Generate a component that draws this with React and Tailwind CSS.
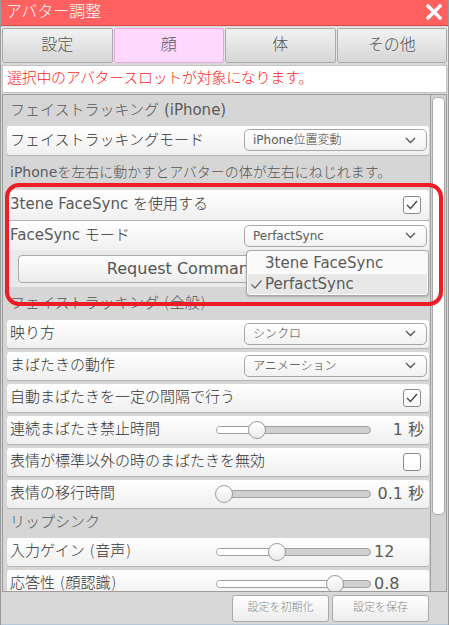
import React from "react";

const F = { fontFamily: '"DejaVu Sans", "Noto Sans CJK JP", sans-serif' };

function L({ children }) {
  return <span className="font-normal text-[#5a5a5a]">{children}</span>;
}

function Chevron() {
  return (
    <svg width="11" height="7" viewBox="0 0 11 7" className="shrink-0">
      <path d="M1 1 L5.5 5.5 L10 1" fill="none" stroke="#555" strokeWidth="1.3" />
    </svg>
  );
}

function Select({ value }) {
  return (
    <div className="ml-auto mr-[2px] w-[183px] h-[22px] rounded-[5px] border border-[#a8a8a8] bg-gradient-to-b from-white to-[#f2f2f2] flex items-center pl-[8px] pr-[10px]">
      <span className="text-[12px] text-[#444] leading-none">{value}</span>
      <span className="ml-auto"><Chevron /></span>
    </div>
  );
}

function Check({ checked }) {
  return (
    <div className="ml-auto mr-[8px] w-[18px] h-[18px] rounded-[3px] border border-[#8a8a8a] bg-white flex items-center justify-center">
      {checked && (
        <svg width="14" height="12" viewBox="0 0 14 12">
          <path d="M2 6 L5.5 9.5 L12 2" fill="none" stroke="#444" strokeWidth="1.3" />
        </svg>
      )}
    </div>
  );
}

function Slider({ pos, value, right }) {
  return (
    <div className="ml-auto flex items-center">
      <div className="relative w-[155px] h-[18px] flex items-center">
        <div className="w-full h-[8px] rounded-full border border-[#a0a0a0] bg-[#d0d0d0] overflow-hidden flex">
          <div className="h-full bg-white" style={{ width: pos + "px" }} />
        </div>
        <div
          className="absolute top-0 w-[18px] h-[18px] rounded-full border border-[#9a9a9a] bg-gradient-to-b from-white to-[#ececec]"
          style={{ left: pos - 9 + "px" }}
        />
      </div>
      <div className={"w-[58px] flex text-[16px] text-[#5a5a5a] leading-none font-normal " + (right ? "justify-end pr-[5px]" : "pl-[3px]")}>
        {value}
      </div>
    </div>
  );
}

function Row({ label, children, h = "h-[28px]" }) {
  return (
    <div className={h + " rounded-[3px] bg-gradient-to-b from-white to-[#efefef] shadow-[0_1px_0_#b4b4b4] flex items-center pl-[3px]"}>
      <span className="text-[15px] text-[#333] leading-none whitespace-nowrap">{label}</span>
      {children}
    </div>
  );
}

function Section({ label, h }) {
  return (
    <div className={h + " flex items-center pl-[3px]"}>
      <span className="text-[15px] text-[#555] leading-none">{label}</span>
    </div>
  );
}

function Tab({ label, active }) {
  return (
    <div
      className={
        "flex-1 flex items-center justify-center rounded-[2px] border text-[16px] text-[#555] " +
        (active
          ? "bg-[#ffd8ff] border-[#e6a6e6]"
          : "bg-gradient-to-b from-[#f2f2f2] to-[#d6d6d6] border-[#a9a9a9]")
      }
    >
      {label}
    </div>
  );
}

export default function App() {
  return (
    <div style={F} className="relative w-[449px] h-[625px] overflow-hidden bg-[#d9d9d9] border-x border-[#9a9a9a] flex flex-col font-light">
      {/* title */}
      <div className="h-[26px] bg-[#ff6161] flex items-center pl-[5px] pr-[6px] border-b border-[#d84c4c]">
        <span className="text-white text-[16px] leading-none">アバター調整</span>
        <svg className="ml-auto" width="16" height="16" viewBox="0 0 16 16">
          <path d="M2 2 L14 14 M14 2 L2 14" stroke="white" strokeWidth="3.4" strokeLinecap="square" />
        </svg>
      </div>
      {/* tabs */}
      <div className="mt-[1px] h-[36px] flex gap-[1px] px-[1px] bg-[#e6e6e6] pt-[1px]">
        <Tab label="設定" />
        <Tab label="顔" active />
        <Tab label="体" />
        <Tab label="その他" />
      </div>
      {/* notice */}
      <div className="mt-[2px] mx-[1px] h-[28px] bg-white border border-[#c4c4c4] flex items-center pl-[4px]">
        <span className="text-[15px] text-[#ff1f1f] leading-none tracking-[-0.3px]">選択中のアバタースロットが対象になります。</span>
      </div>
      {/* panel */}
      <div className="mt-[1px] mx-[1px] h-[500px] border border-[#9c9c9c] bg-[#d6d6d6] flex overflow-hidden">
        <div className="flex-1 flex flex-col pl-[4px] pr-[1px] overflow-hidden">
          <Section label={<>フェイストラッキング <L>(iPhone)</L></>} h="h-[31px] shrink-0" />
          <Row label="フェイストラッキングモード" h="h-[29px] shrink-0">
            <Select value={<><L>iPhone</L>位置変動</>} />
          </Row>
          <div className="h-[35px] shrink-0 flex items-center pl-[3px]">
            <span className="text-[14px] text-[#555] leading-none whitespace-nowrap"><L>iPhone</L>を左右に動かすとアバターの体が左右にねじれます。</span>
          </div>
          <Row label={<><L>3tene FaceSync</L> を使用する</>} h="h-[30px] shrink-0">
            <Check checked />
          </Row>
          <div className="h-[1px] shrink-0" />
          <Row label={<><L>FaceSync</L> モード</>} h="h-[30px] shrink-0">
            <Select value={<L>PerfactSync</L>} />
          </Row>
          <div className="h-[36px] shrink-0 bg-[#e9e9e9] flex items-center pl-[11px]">
            <div className="w-[330px] h-[28px] rounded-[4px] border border-[#a8a8a8] bg-gradient-to-b from-white to-[#ebebeb] flex items-center justify-center">
              <span className="text-[16px] text-[#555] leading-none font-normal">Request Command</span>
            </div>
          </div>
          <Section label="フェイストラッキング (全般)" h="h-[33px] shrink-0" />
          <div className="flex flex-col gap-[4px] shrink-0">
            <Row label="映り方"><Select value="シンクロ" /></Row>
            <Row label="まばたきの動作"><Select value="アニメーション" /></Row>
            <Row label="自動まばたきを一定の間隔で行う"><Check checked /></Row>
            <Row label="連続まばたき禁止時間"><Slider pos={41} value="1 秒" right /></Row>
            <Row label="表情が標準以外の時のまばたきを無効"><Check /></Row>
            <Row label="表情の移行時間"><Slider pos={8} value="0.1 秒" right /></Row>
          </div>
          <Section label="リップシンク" h="h-[30px] shrink-0" />
          <div className="flex flex-col gap-[4px] shrink-0">
            <Row label="入力ゲイン (音声)"><Slider pos={61} value="12" /></Row>
            <Row label="応答性 (顔認識)"><Slider pos={119} value="0.8" /></Row>
          </div>
        </div>
        {/* scrollbar */}
        <div className="w-[16px] shrink-0 border-l border-[#a0a0a0] bg-[#d2d2d2] pt-[2px] px-[1px]">
          <div className="h-[418px] rounded-[5px] border border-[#a8a8a8] bg-white" />
        </div>
      </div>
      {/* footer */}
      <div className="flex-1 flex justify-end gap-[3px] pr-[19px] pt-[3px] pb-[2px] bg-[#d8d8d8] border-b border-[#b8c8d8]">
        <div className="w-[97px] h-[27px] rounded-[3px] border border-[#aaa] bg-gradient-to-b from-white to-[#ececec] flex items-center justify-center text-[11px] text-[#888]">設定を初期化</div>
        <div className="w-[97px] h-[27px] rounded-[3px] border border-[#aaa] bg-gradient-to-b from-white to-[#ececec] flex items-center justify-center text-[11px] text-[#888]">設定を保存</div>
      </div>

      {/* dropdown popup */}
      <div className="absolute left-[245px] top-[250px] w-[183px] h-[46px] rounded-[4px] border border-[#a8a8a8] bg-[#fafafa] shadow-[0_1px_2px_rgba(0,0,0,0.2)] flex flex-col pt-[2px] font-normal text-[#5a5a5a]">
        <div className="h-[21px] flex items-center pl-[18px] text-[15px] leading-none">3tene FaceSync</div>
        <div className="h-[20px] mx-[1px] bg-[#e8e8e8] flex items-center pl-[2px] text-[15px] leading-none">
          <svg width="13" height="11" viewBox="0 0 13 11" className="mr-[2px]">
            <path d="M1.5 5.5 L5 9 L11.5 1.5" fill="none" stroke="#666" strokeWidth="1.2" />
          </svg>
          PerfactSync
        </div>
      </div>

      {/* red annotation */}
      <div className="absolute left-[4px] top-[183px] w-[438px] h-[123px] rounded-[14px] border-[4px] border-[#ee1c25]" />
    </div>
  );
}
